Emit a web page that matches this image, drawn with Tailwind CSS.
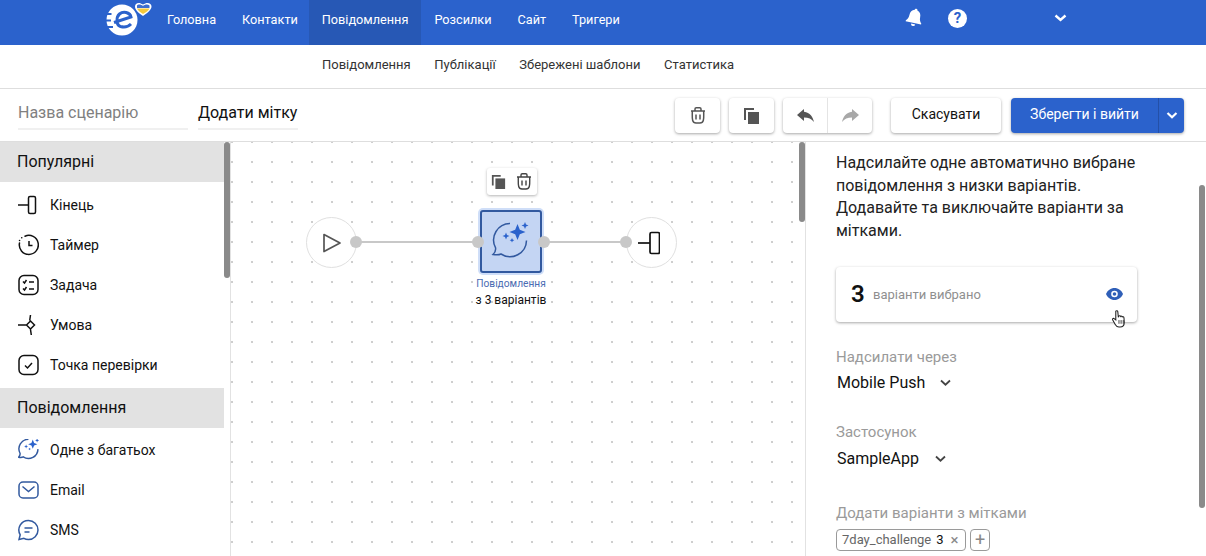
<!DOCTYPE html>
<html>
  <head>
    <title>Сценарій</title>
    <script src="https://cdn.jsdelivr.net/npm/@tailwindcss/browser@4"></script>
  </head>
  <body class="w-[1206px] h-[556px] overflow-hidden bg-white text-[#111] font-['Roboto',sans-serif] flex flex-col">
    <!-- top nav -->
    <header class="h-[45px] shrink-0 bg-[#2b62cc] flex items-stretch text-white text-[12.700px] pl-[104px]">
      <svg width="50" height="40" viewBox="0 0 50 40">
        <circle cx="18" cy="20" r="15.500" fill="#fff"/>
        <path d="M10 22.500 L27 17 C26 12 19 11 15.500 14 C12 17 12 25 16.500 26.500 C20 27.500 24 27 27 24" fill="none" stroke="#2b62cc" stroke-width="3"/>
        <path d="M1.500 14h6M1 20.500h6M3 27h6" stroke="#2b62cc" stroke-width="2.200"/>
        <path d="M39 16 C33 12 31 9 31 6.500 C31 3 35 1.500 39 4.500 C43 1.500 47.500 3 47.500 6.500 C47.500 9 45 12 39 16Z" fill="#fff"/>
        <path d="M33 5.500 C34 4 37 4 39 6 C41 4 44 4 45.500 5.500 L45.500 8 H33Z" fill="#3d6fd1"/>
        <path d="M33 8.500 H45.500 C44.500 10.500 42 12.500 39 14 C36.500 12.500 34 10.500 33 8.500Z" fill="#f5c93c"/>
      </svg>
      <nav class="flex items-stretch">
        <a class="px-[13px] pb-[6px] flex items-center">Головна</a>
        <a class="pl-[13px] pr-[11px] pb-[6px] flex items-center">Контакти</a>
        <a class="px-[13px] pb-[6px] flex items-center bg-[#2758b5]">Повідомлення</a>
        <a class="px-[13px] pb-[6px] flex items-center">Розсилки</a>
        <a class="px-[13px] pb-[6px] flex items-center">Сайт</a>
        <a class="px-[13px] pb-[6px] flex items-center">Тригери</a>
      </nav>
      <div class="absolute left-[904px] top-[7px]">
        <svg width="21" height="21" viewBox="0 0 20 20" fill="#fff"><g transform="rotate(12 10 10)"><path d="M10 1.500c-.8 0-1.300.6-1.300 1.300C6 3.500 4.800 5.700 4.800 8.500c0 3.500-1.300 4.800-2.300 5.800v1h15v-1c-1-1-2.300-2.300-2.300-5.800 0-2.800-1.200-5-3.900-5.700 0-.7-.5-1.300-1.300-1.300z"/><path d="M8 16.300h4a2 2 0 0 1-4 0z"/></g></svg>
      </div>
      <div class="absolute left-[948px] top-[9px] w-[19px] h-[19px] rounded-full bg-white text-[#2b62cc] text-[15px] font-bold flex items-center justify-center">?</div>
      <svg class="absolute left-[1054px] top-[13px]" width="13" height="10" viewBox="0 0 13 10"><path d="M1.500 2.500l5 4.500 5-4.500" fill="none" stroke="#fff" stroke-width="2.400"/></svg>
    </header>

    <!-- sub nav -->
    <div class="h-[44px] shrink-0 border-b border-[#dedede] flex items-center gap-[23.500px] pl-[322px] pb-[3px] text-[13px] text-[#333]">
      <a>Повідомлення</a>
      <a>Публікації</a>
      <a>Збережені шаблони</a>
      <a>Статистика</a>
    </div>

    <!-- toolbar -->
    <div class="h-[53px] shrink-0 border-b border-[#dedede] flex items-center pl-[18px]">
      <div class="w-[170px] h-[30px] border-b-2 border-[#f0f0f0] text-[16px] text-[#808080] leading-[26px]">Назва сценарію</div>
      <div class="ml-[10px] w-[100px] h-[30px] border-b-2 border-[#f0f0f0] text-[16px] text-[#111] leading-[26px]">Додати мітку</div>
      <button class="ml-auto w-[45px] h-[35px] rounded-[4px] bg-white shadow-[0_1px_3px_rgba(0,0,0,.35)] flex items-center justify-center">
        <svg width="18" height="19" viewBox="0 0 18 19" fill="none" stroke="#555" stroke-width="1.500"><path d="M2 5h14M6 4.500V3c0-.8.5-1.300 1.300-1.300h3.400c.8 0 1.300.5 1.300 1.300v1.500M3.300 5.500c0 4-.3 6.500.4 9 .4 1.500 1.800 2.500 3.300 2.500h4c1.500 0 2.900-1 3.300-2.500.7-2.500.4-5 .4-9"/><path d="M7 8.500v5M11 8.500v5"/></svg>
      </button>
      <button class="ml-[9px] w-[45px] h-[35px] rounded-[4px] bg-white shadow-[0_1px_3px_rgba(0,0,0,.35)] flex items-center justify-center">
        <svg width="17" height="17" viewBox="0 0 17 17"><path d="M1 1h10v2H3v10H1z" fill="#555"/><path d="M5 5h11v12H5z" fill="#555"/></svg>
      </button>
      <div class="ml-[9px] w-[89px] h-[35px] rounded-[4px] bg-white shadow-[0_1px_3px_rgba(0,0,0,.35)] flex">
        <button class="flex-1 flex items-center justify-center border-r border-[#e4e4e4]">
          <svg width="19" height="15" viewBox="0 0 19 15"><path d="M8 1L1 7l7 6V9.500c4.500 0 7.500 1.200 10 4.500-1-5-4-9.500-10-10.300z" fill="#555"/></svg>
        </button>
        <button class="flex-1 flex items-center justify-center">
          <svg width="19" height="15" viewBox="0 0 19 15"><path d="M11 1l7 6-7 6V9.500c-4.500 0-7.500 1.200-10 4.500 1-5 4-9.500 10-10.300z" fill="#a8a8a8"/></svg>
        </button>
      </div>
      <button class="ml-[19px] w-[110px] h-[35px] pb-[1px] rounded-[4px] bg-white shadow-[0_1px_3px_rgba(0,0,0,.35)] text-[14px] text-[#111]">Скасувати</button>
      <div class="ml-[10px] mr-[22px] w-[173px] h-[35px] rounded-[4px] bg-[#2b62cc] shadow-[0_1px_3px_rgba(0,0,0,.35)] flex text-white text-[14px]">
        <button class="w-[148px] pb-[1px] border-r border-[#2450a8]">Зберегти і вийти</button>
        <button class="flex-1 flex items-center justify-center">
          <svg width="12" height="9" viewBox="0 0 12 9"><path d="M1.500 2l4.500 4.200L10.500 2" fill="none" stroke="#fff" stroke-width="2.200"/></svg>
        </button>
      </div>
    </div>

    <main class="flex-1 flex min-h-0">
      <!-- palette -->
      <aside class="relative w-[231px] shrink-0 border-r border-[#e2e2e2] overflow-hidden pr-[6px]">
        <h2 class="h-10 bg-[#e2e2e2] pl-[17px] flex items-center text-[16px]">Популярні</h2>
        <ul class="pt-[3px] pb-[3px] text-[14px]">
          <li class="h-10 flex items-center gap-[11px] pl-[18px]">
            <svg width="21" height="22" viewBox="0 0 21 22" fill="none" stroke="#111" stroke-width="1.500"><path d="M0 11h10"/><rect x="10.500" y="2.500" width="7" height="17" rx="1.500"/></svg>Кінець</li>
          <li class="h-10 flex items-center gap-[11px] pl-[18px]">
            <svg width="21" height="22" viewBox="0 0 21 22" fill="none" stroke="#111" stroke-width="1.500"><path d="M7 2.200A9.500 9.500 0 1 1 1.500 9" stroke-linecap="round"/><path d="M1.500 6.500l.1 0M3.700 3.800l.1 0" stroke-linecap="round"/><path d="M11 7v4.500h3.500"/></svg>Таймер</li>
          <li class="h-10 flex items-center gap-[11px] pl-[18px]">
            <svg width="21" height="22" viewBox="0 0 21 22" fill="none" stroke="#111" stroke-width="1.500"><rect x="1" y="1.500" width="19" height="19" rx="5"/><path d="M5 7.500l1.500 1.500 2-3M5 14.500l1.500 1.500 2-3M11 8h5M11 15h5"/></svg>Задача</li>
          <li class="h-10 flex items-center gap-[11px] pl-[18px]">
            <svg width="21" height="22" viewBox="0 0 21 22" fill="none" stroke="#111" stroke-width="1.500"><path d="M12.500 7l4 4-4 4-4-4zM0 11h8M12.500 1l-.8 5.500M12.500 15.500l.8 5.500"/></svg>Умова</li>
          <li class="h-10 flex items-center gap-[11px] pl-[18px]">
            <svg width="21" height="22" viewBox="0 0 21 22" fill="none" stroke="#111" stroke-width="1.500"><rect x="1" y="1.500" width="19" height="19" rx="5"/><path d="M7 11.500l2.500 2.500 4.500-5"/></svg>Точка перевірки</li>
        </ul>
        <h2 class="h-10 bg-[#e2e2e2] pl-[17px] flex items-center text-[16px]">Повідомлення</h2>
        <ul class="pt-[2px] text-[14px]">
          <li class="h-10 flex items-center gap-[10px] pl-[18px]">
            <svg width="22" height="22" viewBox="0 0 38 38" fill="none" stroke="#32599f" stroke-width="2.500"><path d="M18 .5A16.500 16.500 0 0 0 3.500 24.600C4 27 3 29.500 1 31.500c3 .5 6 .5 8-.5A16.500 16.500 0 0 0 34.500 17.500"/><path d="M25.500 1l2.300 5.700 5.700 2.300-5.700 2.300-2.300 5.700-2.300-5.700L17.500 9l5.700-2.300z" fill="#2b62cc" stroke="none"/><path d="M33 -1l1 2.500 2.500 1-2.500 1-1 2.500-1-2.500-2.500-1 2.500-1z" fill="#2b62cc" stroke="none"/><path d="M14 9.500l1 2.500 2.500 1-2.500 1-1 2.500-1-2.500-2.500-1 2.500-1z" fill="#2b62cc" stroke="none"/><path d="M20 15l.7 1.600 1.600.7-1.600.7-.7 1.600-.7-1.600-1.600-.7 1.600-.7z" fill="#2b62cc" stroke="none"/></svg>Одне з багатьох</li>
          <li class="h-10 flex items-center gap-[11px] pl-[18px]">
            <svg width="21" height="22" viewBox="0 0 21 22" fill="none" stroke="#32599f" stroke-width="1.500"><rect x="1" y="3" width="19" height="16" rx="4"/><path d="M4.500 7.500l6 5 6-5"/></svg>Email</li>
          <li class="h-10 flex items-center gap-[11px] pl-[18px]">
            <svg width="21" height="22" viewBox="0 0 21 22" fill="none" stroke="#32599f" stroke-width="1.500"><path d="M10.500 1.500a9.500 9.500 0 0 1 0 19c-1.700 0-3.300-.4-4.600-1.200L1 20.500l1.200-4.700A9.500 9.500 0 0 1 10.500 1.500z"/><path d="M6.500 9h8M6.500 13h5"/></svg>SMS</li>
        </ul>
        <div class="absolute right-0 top-0 w-[6px] h-[136px] rounded-full bg-[#8a8a8a]"></div>
      </aside>

      <!-- flow canvas -->
      <section class="relative w-[575px] shrink-0 border-r border-[#e2e2e2] bg-[radial-gradient(circle,#cdcdcd_0.7px,transparent_1px)] bg-[size:20px_20px] bg-[position:-9px_-10px]">
        <div class="absolute left-[125px] top-[99px] w-[122px] h-[2px] bg-[#c8c8c8]"></div>
        <div class="absolute left-[313px] top-[99px] w-[82px] h-[2px] bg-[#c8c8c8]"></div>

        <div class="absolute left-[75px] top-[75px] w-[51px] h-[51px] rounded-full border border-[#e0e0e0] bg-white flex items-center justify-center">
          <svg width="22" height="22" viewBox="0 0 22 22" fill="none" stroke="#555" stroke-width="1.700"><path d="M3 2.500l16 8.500-16 8.500z" stroke-linejoin="round"/></svg>
        </div>
        <div class="absolute left-[395px] top-[75px] w-[51px] h-[51px] rounded-full border border-[#e0e0e0] bg-white flex items-center justify-center pr-[6px]">
          <svg width="22" height="24" viewBox="0 0 22 24" fill="none" stroke="#111" stroke-width="1.700"><path d="M0 12h12"/><rect x="12" y="1.500" width="9.500" height="21" rx="1.500"/></svg>
        </div>

        <div class="absolute left-[256px] top-[26px] w-[50px] h-[27px] rounded-[3px] bg-white shadow-[0_1px_3px_rgba(0,0,0,.3)] flex items-center justify-center gap-[9px]">
          <svg width="15" height="15" viewBox="0 0 17 17"><path d="M1 1h10v2H3v10H1z" fill="#555"/><path d="M5 5h11v12H5z" fill="#555"/></svg>
          <svg width="18" height="19" viewBox="0 0 18 19" fill="none" stroke="#444" stroke-width="1.400"><path d="M2 5h14M6 4.500V3c0-.8.5-1.300 1.300-1.300h3.400c.8 0 1.300.5 1.300 1.300v1.500M3.300 5.500c0 4-.3 6.500.4 9 .4 1.500 1.800 2.500 3.300 2.500h4c1.500 0 2.900-1 3.300-2.500.7-2.500.4-5 .4-9"/><path d="M7 8.500v5M11 8.500v5"/></svg>
        </div>

        <div class="absolute left-[249px] top-[68px] w-[62px] h-[63px] rounded-[3px] border-[2px] border-[#32599f] bg-[#c4d5f3] shadow-[0_0_0_2px_#cfdef8] flex items-center justify-center">
          <svg width="38" height="38" viewBox="0 0 38 38" fill="none" stroke="#32599f" stroke-width="1.500" class="overflow-visible"><path d="M18 .5A16.500 16.500 0 0 0 3.500 24.600C4 27 3 29.500 1 31.500c3 .5 6 .5 8-.5A16.500 16.500 0 0 0 34.500 17.500"/><path d="M25.500 1l2.300 5.700 5.700 2.300-5.700 2.300-2.300 5.700-2.300-5.700L17.500 9l5.700-2.300z" fill="#2b62cc" stroke="none"/><path d="M33 -1l1 2.500 2.500 1-2.500 1-1 2.500-1-2.500-2.500-1 2.500-1z" fill="#2b62cc" stroke="none"/><path d="M14 9.500l1 2.500 2.500 1-2.500 1-1 2.500-1-2.500-2.500-1 2.500-1z" fill="#2b62cc" stroke="none"/><path d="M20 15l.7 1.600 1.600.7-1.600.7-.7 1.600-.7-1.600-1.600-.7 1.600-.7z" fill="#2b62cc" stroke="none"/></svg>
        </div>
        <div class="absolute left-[230px] top-[135px] w-[100px] text-center">
          <div class="text-[10.200px] leading-[14px] text-[#4a6cb3]">Повідомлення</div>
          <div class="text-[12px] leading-[18px] text-[#111]">з 3 варіантів</div>
        </div>

        <div class="absolute left-[119px] top-[94px] w-[12px] h-[12px] rounded-full bg-[#c8c8c8]"></div>
        <div class="absolute left-[241px] top-[94px] w-[12px] h-[12px] rounded-full bg-[#c8c8c8]"></div>
        <div class="absolute left-[307px] top-[94px] w-[12px] h-[12px] rounded-full bg-[#c8c8c8]"></div>
        <div class="absolute left-[389px] top-[94px] w-[12px] h-[12px] rounded-full bg-[#c8c8c8]"></div>

        <div class="absolute right-0 top-0 w-[6px] h-[80px] rounded-full bg-[#8a8a8a]"></div>
      </section>

      <!-- settings panel -->
      <aside class="relative flex-1 min-w-0 overflow-hidden pl-[30px]">
        <p class="mt-[10px] w-[310px] text-[16px] leading-[22.700px] text-[#222]">Надсилайте одне автоматично вибране повідомлення з низки варіантів. Додавайте та виключайте варіанти за мітками.</p>
        <div class="mt-[24px] w-[301px] h-[55px] rounded-[4px] bg-white shadow-[0_1px_3px_rgba(0,0,0,.35)] flex items-center pl-[15px] pr-[14px]">
          <span class="text-[24px] font-semibold w-[22px]">3</span>
          <span class="text-[13px] text-[#8f8f8f]">варіанти вибрано</span>
          <svg class="ml-auto" width="17" height="12" viewBox="0 0 17 12"><path d="M8.500 0C4.700 0 1.500 2.500 0 6c1.500 3.500 4.700 6 8.500 6s7-2.500 8.500-6C15.500 2.500 12.300 0 8.500 0z" fill="#2f5fb8"/><circle cx="8.500" cy="6" r="3.300" fill="#fff"/><circle cx="8.500" cy="6" r="1.800" fill="#2f5fb8"/></svg>
        </div>
        <div class="mt-[25px] text-[15px] leading-[20px] text-[#9a9a9a]">Надсилати через</div>
        <div class="mt-[4px] flex items-center text-[16px] leading-[24px] pl-[1px]">Mobile Push
          <svg class="ml-[15px]" width="11" height="8" viewBox="0 0 11 8"><path d="M1 1.500l4.500 4.200L10 1.500" fill="none" stroke="#444" stroke-width="1.800"/></svg>
        </div>
        <div class="mt-[27px] text-[15px] leading-[20px] text-[#9a9a9a]">Застосунок</div>
        <div class="mt-[5px] flex items-center text-[16px] leading-[24px] pl-[1px]">SampleApp
          <svg class="ml-[16px]" width="11" height="8" viewBox="0 0 11 8"><path d="M1 1.500l4.500 4.200L10 1.500" fill="none" stroke="#444" stroke-width="1.800"/></svg>
        </div>
        <div class="mt-[32px] text-[15px] leading-[20px] text-[#9a9a9a]">Додати варіанти з мітками</div>
        <div class="mt-[6px] flex items-center gap-[4px]">
          <span class="w-[130px] h-[22px] rounded-[4px] border border-[#9a9a9a] flex items-center pl-[5px] text-[13px] text-[#666]">7day_challenge<b class="ml-[5px] font-normal text-[#111]">3</b><span class="ml-[7px] text-[#888] text-[15px]">×</span></span>
          <span class="w-[20px] h-[22px] rounded-[4px] border border-[#9a9a9a] flex items-center justify-center text-[#888] text-[18px]">+</span>
        </div>
        <svg class="absolute left-[305px] top-[167px]" width="17" height="20" viewBox="0 0 16 18" fill="#fff" stroke="#222" stroke-width="1"><path d="M4.500 1.500c.8-.7 1.800-.2 1.900.6l.5 5.200.4-1c.6-.6 1.500-.3 1.700.3.500-.5 1.400-.3 1.600.4.600-.4 1.500 0 1.600.8l.3 4.200c0 2.500-1.500 4.500-4 4.500H7.500c-1.700 0-2.800-1-3.500-2.300L1.500 9.800c-.4-.8.500-1.700 1.400-1.200l1.600 1.300z"/><path d="M7.500 10v3.500M9.500 10v3.500M11.500 10v3.500" stroke-width=".8"/></svg>
        <div class="absolute right-[1px] top-[43px] w-[6px] h-[323px] rounded-full bg-[#8a8a8a]"></div>
      </aside>
    </main>
  </body>
</html>
